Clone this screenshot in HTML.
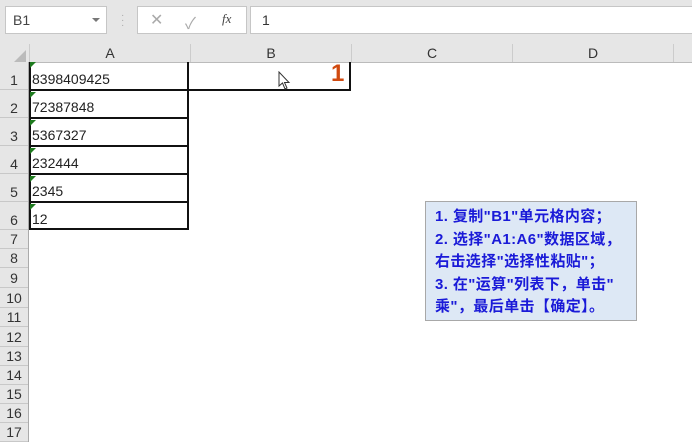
<!DOCTYPE html>
<html><head><meta charset="utf-8"><style>
body{margin:0;width:692px;height:441px;overflow:hidden;background:#fff;font-family:"Liberation Sans","Noto Sans CJK SC",sans-serif;position:relative}
.a{position:absolute}
.top{left:0;top:0;width:692px;height:44px;background:#e6e6e6}
.box{background:#fff;border:1px solid #c6c6c6;box-sizing:border-box}
.hdr{background:#e6e6e6;color:#333;font-size:14px;text-align:center;box-sizing:border-box}
.cell{font-size:14px;color:#222}
</style></head><body>
<div class="a top"></div>
<div class="a box" style="left:5px;top:6px;width:102px;height:28px"></div>
<div class="a" style="left:13px;top:12px;font-size:14px;color:#444">B1</div>
<div class="a" style="left:92px;top:18px;width:0;height:0;border-left:4px solid transparent;border-right:4px solid transparent;border-top:4px solid #777"></div>
<div class="a" style="left:121px;top:13px;color:#aaa;font-size:10px;line-height:5px">·<br>·<br>·</div>
<div class="a box" style="left:137px;top:6px;width:110px;height:28px"></div>
<div class="a" style="left:150px;top:10px;color:#aaa;font-size:16px">✕</div>
<div class="a" style="left:185px;top:10px;color:#aaa;font-size:16px">✓</div>
<div class="a" style="left:222px;top:11px;color:#444;font-size:13px;font-style:italic;font-family:'Liberation Serif',serif">fx</div>
<div class="a box" style="left:250px;top:6px;width:450px;height:28px"></div>
<div class="a" style="left:262px;top:12px;font-size:14px;color:#333">1</div>
<div class="a hdr" style="left:0;top:44px;width:692px;height:19px;border-bottom:1px solid #bbb"></div>
<div class="a" style="left:14px;top:50px;width:0;height:0;border-left:12px solid transparent;border-bottom:12px solid #bbb"></div>
<div class="a hdr" style="left:29px;top:44px;width:161px;height:18px;line-height:18px;border-left:1px solid #ccc">A</div>
<div class="a hdr" style="left:190px;top:44px;width:161px;height:18px;line-height:18px;border-left:1px solid #ccc">B</div>
<div class="a hdr" style="left:351px;top:44px;width:161px;height:18px;line-height:18px;border-left:1px solid #ccc">C</div>
<div class="a hdr" style="left:512px;top:44px;width:162px;height:18px;line-height:18px;border-left:1px solid #ccc;border-right:1px solid #ccc">D</div>
<div class="a" style="left:0;top:62px;width:29px;height:380px;background:#e6e6e6;border-right:1px solid #aaa;box-sizing:border-box"></div>
<div id="rh"></div>
<script>
var h='';var ys=[62,90,118,146,174,202,230,249,268,288,308,327,347,366,385,404,423,442];
for(var i=0;i<17;i++){h+='<div class="a hdr" style="left:0;top:'+ys[i]+'px;width:28px;height:'+(ys[i+1]-ys[i])+'px;line-height:'+(ys[i+1]-ys[i]+(i<6?8:0))+'px;border-bottom:1px solid #c8c8c8">'+(i+1)+'</div>';}
document.getElementById('rh').innerHTML=h;
</script>
<div class="a" style="left:29px;top:62px;width:160px;height:168px;border:2px solid #111;border-top:none;box-sizing:border-box"></div>
<div class="a" style="left:29px;top:89px;width:160px;height:2px;background:#111"></div>
<div class="a" style="left:29px;top:117px;width:160px;height:2px;background:#111"></div>
<div class="a" style="left:29px;top:145px;width:160px;height:2px;background:#111"></div>
<div class="a" style="left:29px;top:173px;width:160px;height:2px;background:#111"></div>
<div class="a" style="left:29px;top:201px;width:160px;height:2px;background:#111"></div>
<div class="a" style="left:188px;top:62px;width:163px;height:29px;border:2px solid #111;border-top:none;border-left:none;box-sizing:border-box"></div>
<script>
var v=['8398409425','72387848','5367327','232444','2345','12'];var o='';
for(var i=0;i<6;i++){var t=62+i*28;o+='<div class="a cell" style="left:32px;top:'+(t+9)+'px">'+v[i]+'</div><div class="a" style="left:30px;top:'+(t+(i?2:0))+'px;width:0;height:0;border-right:6px solid transparent;border-top:6px solid #1e7a1e"></div>';}
document.body.insertAdjacentHTML('beforeend',o);
</script>
<div class="a" style="left:331px;top:60px;font-size:24px;font-weight:bold;color:#d04a10">1</div>
<svg class="a" style="left:278px;top:71px" width="14" height="20" viewBox="0 0 14 20"><path d="M1 1 L1 15 L4.5 12 L7 18 L9 17 L6.5 11.5 L11 11.5 Z" fill="#fff" stroke="#333" stroke-width="1"/></svg>
<div class="a" style="left:425px;top:201px;width:212px;height:120px;background:#dde8f5;border:1px solid #a8a8a8;box-sizing:border-box;padding:4px 0 0 9px;color:#1a1ad8;font-weight:bold;font-size:15px;letter-spacing:0.4px;line-height:22.5px;white-space:nowrap;font-family:'Liberation Sans','Noto Sans CJK SC',sans-serif">1. 复制"B1"单元格内容；<br>2. 选择"A1:A6"数据区域，<br>右击选择"选择性粘贴"；<br>3. 在"运算"列表下，单击"<br>乘"，最后单击【确定】。</div>
</body></html>
